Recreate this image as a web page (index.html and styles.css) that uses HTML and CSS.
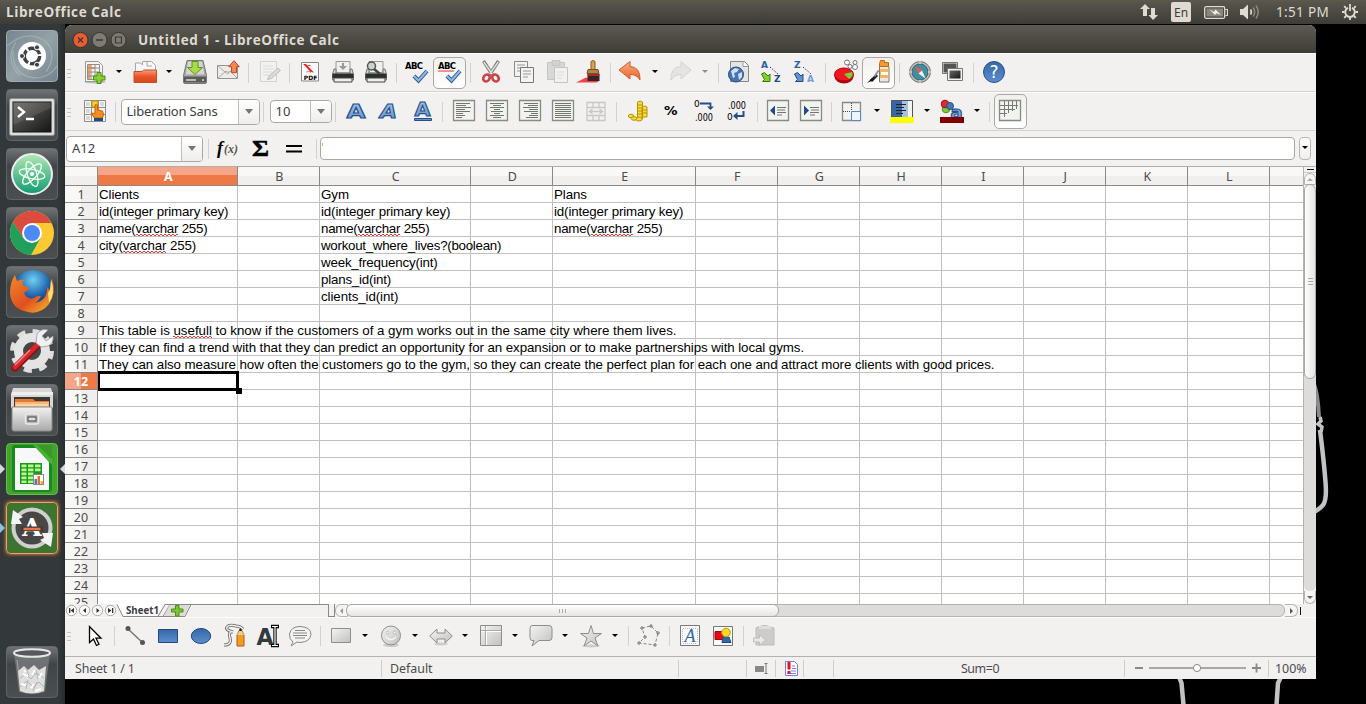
FILE: index.html
```html
<!DOCTYPE html>
<html lang="en">
<head>
<meta charset="utf-8">
<title>Untitled 1 - LibreOffice Calc</title>
<link rel="stylesheet" href="styles.css">
</head>
<body>
<svg class="defs" width="0" height="0" aria-hidden="true">
  <defs>
    <linearGradient id="gOrange" x1="0" y1="0" x2="0" y2="1"><stop offset="0" stop-color="#fbb07c"/><stop offset="1" stop-color="#e9602c"/></linearGradient>
    <linearGradient id="gFolder" x1="0" y1="0" x2="0" y2="1"><stop offset="0" stop-color="#f4a287"/><stop offset=".5" stop-color="#e9562a"/><stop offset="1" stop-color="#d5491c"/></linearGradient>
    <linearGradient id="gGrey" x1="0" y1="0" x2="1" y2="1"><stop offset="0" stop-color="#f4f4f4"/><stop offset="1" stop-color="#c0c0bf"/></linearGradient>
    <linearGradient id="gSteel" x1="0" y1="0" x2="0" y2="1"><stop offset="0" stop-color="#f2f2f2"/><stop offset="1" stop-color="#a9a9a9"/></linearGradient>
    <linearGradient id="gBlue" x1="0" y1="0" x2="0" y2="1"><stop offset="0" stop-color="#3667a6"/><stop offset="1" stop-color="#5c8fce"/></linearGradient>
    <linearGradient id="gPale" x1="0" y1="0" x2="0" y2="1"><stop offset="0" stop-color="#b4cdea"/><stop offset="1" stop-color="#5e8fcb"/></linearGradient>
    <linearGradient id="gTile" x1="0" y1="0" x2="0" y2="1"><stop offset="0" stop-color="#717476"/><stop offset=".35" stop-color="#414547"/><stop offset="1" stop-color="#4b4f51"/></linearGradient>
    <linearGradient id="gDash" x1="0" y1="0" x2="1" y2="1"><stop offset="0" stop-color="#75868e"/><stop offset=".5" stop-color="#95a2a8"/><stop offset="1" stop-color="#74848c"/></linearGradient>
    <linearGradient id="gAtom" x1="0" y1="0" x2="0" y2="1"><stop offset="0" stop-color="#b4e8b4"/><stop offset="1" stop-color="#119b72"/></linearGradient>
    <linearGradient id="gInk" x1="0" y1="0" x2="1" y2="1"><stop offset="0" stop-color="#6a6a68"/><stop offset="1" stop-color="#151515"/></linearGradient>
    <radialGradient id="gFox" cx=".5" cy=".25" r=".7"><stop offset="0" stop-color="#6fd0f4"/><stop offset=".6" stop-color="#1b5ea8"/><stop offset="1" stop-color="#12306d"/></radialGradient>
    <linearGradient id="gFur" x1="0" y1="0" x2="1" y2="1"><stop offset="0" stop-color="#f08a2a"/><stop offset=".55" stop-color="#e0501f"/><stop offset="1" stop-color="#f9c52d"/></linearGradient>
  </defs>
</svg>

<header class="panel">
  <span class="panel-title">LibreOffice Calc</span>
  <div class="indicators">
    <svg width="18" height="16" viewBox="0 0 18 16"><path d="M5 0L10 5H7V12H3V5H0ZM13 16L8.500 11H11V4H15V11H18Z" fill="#dfdbd2"/></svg>
    <span class="lang">En</span>
    <svg class="battery" width="24" height="13" viewBox="0 0 24 13"><rect x=".7" y=".7" width="20" height="11.600" rx="1.500" fill="none" stroke="#dfdbd2" stroke-width="1.300"/><rect x="2.500" y="2.500" width="16.500" height="8" fill="#88867f"/><path d="M21.500 3.500h2v6h-2" fill="none" stroke="#dfdbd2" stroke-width="1.200"/><path d="M5.500 3.500L10 6l1.500-2.500 5.500 5.500-4.500-1.800-1.500 1.800z" fill="#f3efe6"/></svg>
    <svg class="sound" width="20" height="16" viewBox="0 0 20 16"><path d="M0 5h3l5-4.500v15L3 11H0z" fill="#dfdbd2"/><path d="M10.500 5.500q1.700 2.500 0 5" fill="none" stroke="#dfdbd2" stroke-width="1.600"/><path d="M13.200 3.500q3 4.500 0 9M16 1.500q4.500 6.500 0 13" fill="none" stroke="#8d8a82" stroke-width="1.500"/></svg>
    <span class="clock">1:51 PM</span>
    <svg class="gear" width="16" height="16" viewBox="0 0 16 16" fill="none" stroke="#dfdbd2"><path d="M6 3.800A4.800 4.800 0 1 0 10 3.800" stroke-width="2"/><path d="M8 0V7M8 13.500V16M0 8H2.500M13.500 8H16M2.200 2.200L4 4M12 12l1.800 1.800M13.800 2.200L12 4M4 12l-1.800 1.800" stroke-width="1.800"/></svg>
  </div>
</header>

<div class="desktop">
  <nav class="launcher">
    <svg class="tile" viewBox="0 0 52 52"><rect class="tile-dash" x=".5" y=".5" width="51" height="51" rx="4"/><g fill="none" stroke="#b4c0c5" stroke-opacity=".55" stroke-width="1.300"><path d="M1 16Q22 -2 40 12Q52 24 40 42"/><path d="M7 21Q6 45 28 48Q43 48 51 36"/><path d="M10 12Q-2 30 14 46"/></g><circle cx="26" cy="26" r="14" fill="#fff"/><circle cx="26" cy="26" r="7.700" fill="none" stroke="#3b4145" stroke-width="3.400" stroke-dasharray="14 2.130"/><g fill="#3b4145" stroke="#fff"><circle cx="16" cy="26" r="2.500"/><circle cx="31" cy="17.300" r="2.500"/><circle cx="31" cy="34.700" r="2.500"/></g></svg>
    <svg class="tile" viewBox="0 0 52 52"><rect class="tile-bg" x=".5" y=".5" width="51" height="51" rx="4"/><rect x="3.500" y="9.500" width="45" height="37" rx="2" fill="#dcdcdc" stroke="#8d8d8d"/><rect x="7" y="13" width="38" height="30" fill="url(#gInk)" stroke="#111"/><path d="M7 13h38v6L7 36z" fill="#fff" opacity=".1"/><path d="M12 18l6 5-6 5M20 30h8" fill="none" stroke="#fff" stroke-width="2.400"/></svg>
    <svg class="tile" viewBox="0 0 52 52"><rect class="tile-bg" x=".5" y=".5" width="51" height="51" rx="4"/><circle cx="26" cy="26" r="20" fill="url(#gAtom)" stroke="#ededed" stroke-width="2"/><g fill="none" stroke="#f2fff5" stroke-width="1.300"><ellipse cx="26" cy="26" rx="13" ry="4.700" transform="rotate(12 26 26)"/><ellipse cx="26" cy="26" rx="13" ry="4.700" transform="rotate(72 26 26)"/><ellipse cx="26" cy="26" rx="13" ry="4.700" transform="rotate(132 26 26)"/></g><circle cx="26" cy="26" r="2" fill="#fff"/></svg>
    <svg class="tile" viewBox="0 0 52 52"><rect class="tile-bg" x=".5" y=".5" width="51" height="51" rx="4"/><circle cx="26" cy="26" r="22" fill="#fbc934"/><path d="M26 26L26 16H45.600A22 22 0 0 0 7 15L17 31z" fill="#db4c3f"/><path d="M7 15A22 22 0 0 0 25 48L34.500 31L17.300 31z" fill="#21a05c"/><circle cx="26" cy="26" r="10" fill="#fff"/><circle cx="26" cy="26" r="8" fill="#4c8bf5"/></svg>
    <svg class="tile" viewBox="0 0 52 52"><rect class="tile-bg" x=".5" y=".5" width="51" height="51" rx="4"/><circle cx="27" cy="24" r="20" fill="url(#gFox)"/><path d="M46 12Q51 27 43 38Q34 49 22 46Q5 43 4 27Q4 16 9 9L11 15Q15 13 18 14Q15 18 18 20L24 22Q20 25 18 27Q21 34 28 32Q31 29 35 30Q32 36 28 37Q42 35 41 21L44 24Q46 18 46 12Z" fill="url(#gFur)"/><path d="M45 13Q50 26 43 37L42 27L44 24Z" fill="#ffe06a"/></svg>
    <svg class="tile" viewBox="0 0 52 52"><rect class="tile-bg" x=".5" y=".5" width="51" height="51" rx="4"/><circle cx="26" cy="26" r="19.500" fill="none" stroke="#dedede" stroke-width="5" stroke-dasharray="8 7.315"/><circle cx="26" cy="26" r="13.500" fill="none" stroke="#e4e4e4" stroke-width="9"/><path d="M9 43L34 18" stroke="#8c1212" stroke-width="7" stroke-linecap="round"/><path d="M9 42L33 18" stroke="#d7262d" stroke-width="5" stroke-linecap="round"/><path d="M9 40L24 25" stroke="#f28a8d" stroke-width="1.500"/><path d="M30 18L31 9Q35 3 42 5L36 11L40 16L47 11Q48 18 42 21L35 22Z" fill="#f1f1f1" stroke="#999" stroke-width=".8"/></svg>
    <svg class="tile" viewBox="0 0 52 52"><rect class="tile-bg" x=".5" y=".5" width="51" height="51" rx="4"/><path d="M7 4H45L47 11V24H5V11z" fill="#d8d8d7"/><path d="M5 11H47V8H6z" fill="#eee"/><rect x="8" y="13" width="36" height="13" fill="#3b3835"/><path d="M9 15h18l2 2h14v8H9z" fill="#e97832"/><path d="M9 18h34v7H9z" fill="#f6b878"/><path d="M10 21h32" stroke="#fff0d8"/><path d="M6 23H46V45Q46 47 44 47H8Q6 47 6 45z" fill="url(#gSteel)" stroke="#8a8a8a"/><rect x="19.500" y="30" width="13" height="10" rx="2" fill="#b8b8b8" stroke="#e9e9e9" stroke-width="1.500"/><rect x="22" y="33" width="8" height="4" fill="#ddd" stroke="#444"/></svg>
    <div class="running">
      <svg class="tile" viewBox="0 0 52 52"><rect x=".5" y=".5" width="51" height="51" rx="4" fill="#43a42c" stroke="#65bf50"/><rect x="6" y="2" width="40" height="47" rx="3" fill="#168a1c"/><path d="M9 5H31L43 19V47H9z" fill="#f8f8f8"/><path d="M27 2H46V22z" fill="#45b432"/><path d="M31 2H46V16z" fill="#3a9827"/><rect x="14" y="20" width="22" height="21" fill="#18981d"/><g fill="#b8f68f"><path d="M15.500 21.500h5v2.700h-5zM22 21.500h5.500v2.700H22zM29 21.500h5.500v2.700H29zM15.500 25.500h5v2.700h-5zM22 25.500h5.500v2.700H22zM29 25.500h5.500v2.700H29zM15.500 29.500h5v2.700h-5zM22 29.500h5.500v2.700H22zM15.500 33.500h5v2.700h-5zM22 33.500h5.500v2.700H22zM15.500 37.500h5v2.500h-5zM22 37.500h5.500v2.500H22z"/></g><rect x="27.500" y="31.500" width="10" height="10" fill="#fff" stroke="#888"/><path d="M28.500 36h2.500v5h-2.500z" fill="#3c7fc4"/><path d="M31.500 33h2.500v8h-2.500z" fill="#ea6c2a"/><path d="M34.500 38h2.500v3h-2.500z" fill="#e9b52f"/></svg>
    </div>
    <div class="running alert">
      <svg class="tile updater" viewBox="0 0 52 52"><rect x=".5" y=".5" width="51" height="51" rx="4" fill="#3d7431" stroke="#f0a568"/><circle cx="26" cy="26" r="18.500" fill="#484745" stroke="#cfcfcd" stroke-width="4"/><path d="M5 22L7 8L17 15L13 17L16 22z" fill="#f4f4f4"/><path d="M47 31L45 45L34 38L38 36L36 31z" fill="#f4f4f4"/><text x="26" y="34" text-anchor="middle" font-size="25" class="slab white">A</text><path d="M15 26.700h22" stroke="#3c3b39" stroke-width="4.500"/><path d="M17.500 27h17" stroke="#ed7443" stroke-width="2.400"/></svg>
    </div>
    <svg class="tile trash" viewBox="0 0 52 52"><rect class="tile-bg" x=".5" y=".5" width="51" height="51" rx="4"/><path d="M8 7L13 46Q26 50 39 46L44 7z" fill="#7d8082" opacity=".75"/><path d="M12 25L18 20L22 24L28 19L33 24L40 20L38 45Q26 50 14 45z" fill="#dedede"/><path d="M14 32l6-4 5 5 5-6 8 5M14 41l7-6 6 6 6-5 5 5M20 22l3 8M30 24l2 9M22 34l-2 9M31 36l-4 9" stroke="#b4b4b4" fill="none"/><path d="M17 28l5 2M26 29l3-5M25 42l3-4M33 32l3-5M15 38l5 1M29 45l6-2M18 24l2 2" stroke="#fff" stroke-width="2"/><ellipse cx="26" cy="7" rx="18" ry="3.700" fill="#56595a" stroke="#e7e7e7" stroke-width="2"/><path d="M11 14l4 29" stroke="#d6d6d6" opacity=".5"/></svg>
  </nav>

  <main class="window">
    <div class="titlebar">
      <svg width="58" height="18" viewBox="0 0 58 18"><g stroke="#36352f"><circle cx="8.500" cy="9" r="7.500" fill="#e95d33"/><circle cx="27.500" cy="9" r="7.500" fill="#7d7b72"/><circle cx="46.500" cy="9" r="7.500" fill="#7d7b72"/></g><path d="M6 6.500l5 5M11 6.500l-5 5M24 9h7" stroke="#3b3934" stroke-width="1.300"/><path d="M43.500 6h6v6h-6z" fill="none" stroke="#3b3934" stroke-width="1.200"/></svg>
      <span class="window-title">Untitled 1 - LibreOffice Calc</span>
    </div>

    <div class="toolbar">
      <i class="grip"></i>
      <span class="btn"><svg viewBox="0 0 24 24"><ellipse cx="12" cy="22" rx="11" ry="1.500" fill="#bbb"/><path d="M2.500 1.500h13l4 4v16h-17z" fill="#f5f5f4" stroke="#9a9a98"/><path d="M4.500 4.500h12v15h-12zM8 4v16M12 4v16M4 8h13M4 12h13M4 16h13" fill="none" stroke="#8e8e8c"/><path d="M5 4h2.500v3H12v2H7v10H5z" fill="#d9803b" opacity=".7"/><path d="M14 12.500h4v3.500h4v4h-4v3.500h-4V20h-3.500v-4H14z" fill="#87cf35" stroke="#4e8b12"/></svg></span><i class="drop"></i>
      <span class="btn"><svg viewBox="0 0 24 24"><path d="M2.500 20V3h5l2 2v-3.500h9l4 4V13" fill="#f8f8f8" stroke="#a7a7a5"/><path d="M14 2v4h5" fill="none" stroke="#aaa"/><path d="M1 11.500h8l1.500-1.500H23.500V22.500H1z" fill="url(#gFolder)" stroke="#cb4d20"/></svg></span><i class="drop"></i>
      <span class="btn"><svg viewBox="0 0 24 24"><path d="M4 .5h16l3.500 15V22q0 1.500-1.500 1.500H2Q.5 23.500.5 22v-6.500z" fill="#a5a5a3" stroke="#777"/><path d="M5 1.500h14l2.500 13h-19z" fill="#d5d5d3"/><path d="M1 16.500h22V22.500H1z" fill="#5b5b59"/><path d="M3 20h10M19 20h2" stroke="#bbb" stroke-width="2"/><path d="M9 1.500h6v6h4.500L12 14.500 4.500 7.500H9z" fill="#a6db4b" stroke="#5d9619"/></svg></span>
      <span class="btn"><svg viewBox="0 0 24 24"><path d="M1.500 5.500h20v13h-20z" fill="#ececea" stroke="#939391"/><path d="M2 18l8-7 2 1.500 2-1.500 7 7M2 6l9.500 8L18 8" fill="none" stroke="#aaa"/><path d="M18 .7l5.300 6H20.500v6h-5v-6h-2.800z" fill="#f18855" stroke="#c64819"/></svg></span><i class="sep"></i>
      <span class="btn dim"><svg viewBox="0 0 24 24"><path d="M3.500 1.500h16v20h-16z" fill="#f4f4f4" stroke="#aaa"/><path d="M6 6h10M6 9h11M6 12h9M6 15h6" stroke="#bbb"/><path d="M21 8l2.500 2.500-9 8-4 1 1.500-3.500z" fill="#bbb" stroke="#777"/></svg></span><i class="sep"></i>
      <span class="btn"><svg viewBox="0 0 24 24"><path d="M3.500 2.500h17v18.500h-17z" fill="#fbfbfb" stroke="#888"/><path d="M5 4h3l8 8.500-3-.5zM9 5l5 0-3 1z" fill="#e8242b"/><path d="M10 7l2.500 6M8 12l6-1" stroke="#e8242b" opacity=".6"/><text x="12.500" y="20" text-anchor="middle" font-size="6" class="bold">PDF</text></svg></span>
      <span class="btn"><svg viewBox="0 0 24 24"><path d="M5 1.500h14v11H5z" fill="#efefed" stroke="#999"/><path d="M11 3h2v3h3l-4 4-4-4h3z" fill="#999"/><path d="M3 9L1.500 14.500V20h21v-5.500L21 9h-2v5H5V9z" fill="#d1d1cf" stroke="#777"/><path d="M1.500 13.500h21V18h-21z" fill="#2d2d2b"/><path d="M3 18h18v4H3z" fill="#eee" stroke="#444"/></svg></span>
      <span class="btn"><svg viewBox="0 0 24 24"><path d="M5 1.500h14v11H5z" fill="#efefed" stroke="#999"/><path d="M3 9L1.500 14.500V20h21v-5.500L21 9h-2v5H5V9z" fill="#d1d1cf" stroke="#777"/><path d="M1.500 13.500h21V18h-21z" fill="#2d2d2b"/><path d="M3 18h18v4H3z" fill="#eee" stroke="#444"/><circle cx="7.500" cy="6" r="4" fill="#cbd1d3" stroke="#555" stroke-width="1.500"/><path d="M10 9l6 5" stroke="#444" stroke-width="2.500"/></svg></span><i class="sep"></i>
      <span class="btn"><svg viewBox="0 0 24 24"><text x="0" y="9" font-size="8.500" textLength="18" class="bold">ABC</text><path d="M9 16l4.500 4.500L22 11" fill="none" stroke="#2c598f" stroke-width="4"/><path d="M9 16l4.500 4.500L22 11" fill="none" stroke="#8db7e5" stroke-width="2.200"/></svg></span>
      <span class="btn pressed"><svg viewBox="0 0 24 24"><text x="0" y="9" font-size="8.500" textLength="18" class="bold">ABC</text><path d="M0 10.500l1 1 1-1 1 1 1-1 1 1 1-1 1 1 1-1 1 1 1-1 1 1 1-1 1 1 1-1 1 1 1-1" fill="none" stroke="#e11"/><path d="M9 16l4.500 4.500L22 11" fill="none" stroke="#2c598f" stroke-width="4"/><path d="M9 16l4.500 4.500L22 11" fill="none" stroke="#8db7e5" stroke-width="2.200"/></svg></span><i class="sep"></i>
      <span class="btn"><svg viewBox="0 0 24 24"><path d="M4.500 1l9 14M19.500 1l-9 14" stroke="#7a7a78" stroke-width="3.300"/><path d="M4.800 2l8.500 12M19.200 2l-8.500 12" stroke="#dedede" stroke-width="1.500"/><ellipse cx="7.500" cy="18" rx="3" ry="3.700" transform="rotate(35 7.500 18)" fill="none" stroke="#cb4242" stroke-width="2.600"/><ellipse cx="16.500" cy="18" rx="3" ry="3.700" transform="rotate(-35 16.500 18)" fill="none" stroke="#cb4242" stroke-width="2.600"/></svg></span>
      <span class="btn"><svg viewBox="0 0 24 24"><path d="M2.500 1.500h13v15h-13z" fill="#f3f3f1" stroke="#888a85"/><path d="M5 5h8M5 8h8M5 11h4" stroke="#999"/><path d="M8.500 7.500h13v15h-13z" fill="#f3f3f1" stroke="#777"/><path d="M11 11h8M11 14h8M11 17h5" stroke="#999"/></svg></span>
      <span class="btn dim"><svg viewBox="0 0 24 24"><path d="M2.500 2.500h17v17h-17z" fill="#b6b6b4" stroke="#888"/><path d="M7 .5h8v5H7z" fill="#aaa" stroke="#888"/><path d="M9.500 7.500h13v15h-13z" fill="#f3f3f1" stroke="#888"/><path d="M12 12h7M12 15h7M12 18h5" stroke="#bbb"/></svg></span>
      <span class="btn"><svg viewBox="0 0 24 24"><path d="M-2 22.500l10-5 13 4-3 1z" fill="#ef424b"/><path d="M13 1.500q2-2 4 0v9h-4z" fill="#d8a256" stroke="#8d5b1f"/><path d="M10 9.500h10l1 4H9z" fill="#b28549" stroke="#725323"/><path d="M9.500 14h12l0 7-12 0z" fill="#382326"/><path d="M9.500 15h12" stroke="#c72c30" stroke-width="1.500"/></svg></span><i class="sep"></i>
      <span class="btn"><svg viewBox="0 0 24 24"><path d="M0 10L11 1.500V6.500Q21.500 7 21 20Q18 14.500 11 14.500V19z" fill="url(#gOrange)" stroke="#ca622e"/></svg></span><i class="drop"></i>
      <span class="btn dim"><svg viewBox="0 0 24 24"><path d="M22 10L12 1.500V6.500Q1.500 7 2 20Q5 14.500 12 14.500V19z" fill="#d4d4d2" stroke="#aaa"/></svg></span><i class="drop dim"></i><i class="sep"></i>
      <span class="btn"><svg viewBox="0 0 24 24"><path d="M3.500 1.500h14l4 4v16h-18z" fill="#e5e5e3" stroke="#888"/><path d="M16 1.500v5h5" fill="#fff" stroke="#999"/><circle cx="9" cy="14.500" r="7.500" fill="#4774b1" stroke="#244f86"/><path d="M4 11l4-3 4 1-2 3-3 1 1 4-2 1zM11 14l4-2v5l-3 3z" fill="#cfe0f2"/></svg></span>
      <span class="btn"><svg viewBox="0 0 24 24"><text x="1" y="8" font-size="9" class="bold blue">A</text><text x="14" y="22" font-size="9" class="bold navy">Z</text><path d="M10 7l8 7" stroke="#335" stroke-dasharray="1.500 1.500"/><path d="M1.500 14l3-1.500 3.500 3.500 2-2v7.500H2.500l2-2z" fill="#7dd32c" stroke="#3f7a0c"/></svg></span>
      <span class="btn"><svg viewBox="0 0 24 24"><text x="1" y="8" font-size="9" class="bold blue">Z</text><text x="14" y="22" font-size="9" class="bold sky">A</text><path d="M10 7l8 7" stroke="#335" stroke-dasharray="1.500 1.500"/><path d="M1.500 14l3-1.500 3.500 3.500 2-2v7.500H2.500l2-2z" fill="#5f93d2" stroke="#204a87"/></svg></span><i class="sep"></i>
      <span class="btn"><svg viewBox="0 0 24 24"><ellipse cx="10" cy="16.500" rx="9.500" ry="7" fill="#a50d12"/><ellipse cx="10" cy="14.500" rx="9.500" ry="6.500" fill="#f01720" stroke="#b00"/><path d="M10 14l8-2q2 4-3 7z" fill="#76ce38"/><g fill="#fff" stroke="#777"><circle cx="13" cy="2.500" r="2.500"/><circle cx="21" cy="2.500" r="2"/><circle cx="16" cy="6.500" r="2"/><circle cx="21" cy="7" r="2.500"/></g></svg></span>
      <span class="btn pressed"><svg viewBox="0 0 24 24"><path d="M12.500 6q0-3 4.500-3t4.500 3l.5 2v14h-9.500z" fill="#e9e9e7" stroke="#777"/><path d="M13.500 .5h4v2l4 0v4h-9v-3z" fill="#f29a33" stroke="#c46b10"/><path d="M13 9h8.500v9H13z" fill="#f7b45c"/><path d="M14 12h7v3h-7z" fill="#fff"/><path d="M10 15L4 21" stroke="#222" stroke-width="3"/><path d="M11.500 10.500l-4 6" stroke="#8e8e8c" stroke-width="1.800"/><path d="M0 23l5-5 2 2z" fill="#111"/></svg></span><i class="sep"></i>
      <span class="btn"><svg viewBox="0 0 24 24"><circle cx="12" cy="12" r="10.500" fill="#b7b9b7" stroke="#777"/><circle cx="12" cy="12" r="8" fill="#438d9e" stroke="#376876"/><path d="M6.500 5.500l7.500 5-3.500 3z" fill="#e85a50"/><path d="M17.500 18.500l-7-5 3.500-3z" fill="#e3f5f8"/><path d="M12 1v3M12 20v3M1 12h3M20 12h3" stroke="#eee"/></svg></span>
      <span class="btn"><svg viewBox="0 0 24 24"><path d="M2 3h14v10H2z" fill="#555" stroke="#eee"/><path d="M1.500 2.500h15v11h-15z" fill="none" stroke="#777"/><path d="M6.500 8.500h15v12h-15z" fill="#f1f1f1" stroke="#777"/><path d="M8.500 10.500h11v8h-11z" fill="url(#gInk)"/></svg></span><i class="sep"></i>
      <span class="btn"><svg viewBox="0 0 24 24"><circle cx="12" cy="12" r="10.500" fill="url(#gBlue)" stroke="#24538b"/><text x="12" y="18" text-anchor="middle" font-size="17" class="white">?</text></svg></span>
    </div>

    <div class="toolbar">
      <i class="grip"></i>
      <span class="btn"><svg viewBox="0 0 24 24"><path d="M1.500 1.500h21v21h-21zM8.500 1v22M15.500 1v22M1 8.500h22M1 15.500h22" fill="#f6f6f4" stroke="#8d8d8b"/><path d="M3 3h4v4H3zM3 10h4v4H3zM3 17h4v4H3zM17 3h4v4h-4z" fill="#d9d9d7"/><path d="M9 2h6v6H9z" fill="#f7d433" stroke="#bb9510"/><path d="M12 6q1.500-1.500 2.500 0v5l5 1q2 3 0 7h-8l-3.500-5 4 .5z" fill="#f78f1e" stroke="#cf5f05"/><path d="M11 19h9v3h-9z" fill="#214a85"/></svg></span><i class="sep"></i>
      <div class="combo font-combo"><span>Liberation Sans</span><i></i></div><i class="sep"></i>
      <div class="combo size-combo"><span>10</span><i></i></div><i class="sep"></i>
      <span class="btn"><svg viewBox="0 0 24 24"><text x="2.500" y="18.500" font-size="20" textLength="19" lengthAdjust="spacingAndGlyphs" class="bold letter">A</text></svg></span>
      <span class="btn"><svg viewBox="0 0 24 24"><text x="3" y="18.500" font-size="20" textLength="17" lengthAdjust="spacingAndGlyphs" class="bold letter slant">A</text></svg></span>
      <span class="btn"><svg viewBox="0 0 24 24"><text x="4.500" y="16.500" font-size="20" textLength="16" lengthAdjust="spacingAndGlyphs" class="bold letter">A</text><path d="M4.500 19.500h17v2h-17z" fill="#5e8fcb" stroke="#244f88"/></svg></span><i class="sep"></i>
      <span class="btn nudge"><svg viewBox="0 0 24 24"><path class="sheet" d="M1.500 1.500h21v20h-21z"/><path class="lines" d="M4 4.500h14M4 6.500h10M4 8.500h15M4 10.500h9M4 12.500h14M4 14.500h7M4 16.500h9M4 18.500h6"/></svg></span>
      <span class="btn"><svg viewBox="0 0 24 24"><path class="sheet" d="M1.500 1.500h21v20h-21z"/><path class="lines" d="M5 4.500h14M8 6.500h8M5 8.500h14M9 10.500h6M6 12.500h12M9 14.500h6M5 16.500h14M8 18.500h8"/></svg></span>
      <span class="btn"><svg viewBox="0 0 24 24"><path class="sheet" d="M1.500 1.500h21v20h-21z"/><path class="lines" d="M6 4.500h14M10 6.500h10M5 8.500h15M11 10.500h9M6 12.500h14M13 14.500h7M11 16.500h9M8 18.500h12"/></svg></span>
      <span class="btn"><svg viewBox="0 0 24 24"><path class="sheet" d="M1.500 1.500h21v20h-21z"/><path class="lines" d="M4 4.500h16M4 6.500h16M4 8.500h16M4 10.500h16M4 12.500h16M4 14.500h16M4 16.500h16M4 18.500h16"/></svg></span>
      <span class="btn dim"><svg viewBox="0 0 24 24"><path d="M3 3.500h18v18H3zM3 8.500h18M3 16.500h18M9 3.500v5M15 3.500v5M9 16.500v5M15 16.500v5M6 12.500h12M8.500 10l-3 2.500 3 2.500M15.500 10l3 2.500-3 2.500" fill="none" stroke="#8d8f91" stroke-width="1.300"/></svg></span><i class="sep"></i>
      <span class="btn nudge"><svg viewBox="0 0 24 24"><g fill="#f7dc3c" stroke="#b79404"><path d="M11.500 3q3-2 5 0v17h-5zM16 8q3-2 5 0v10h-5z"/><ellipse cx="13" cy="20" rx="3.200" ry="2"/><ellipse cx="5" cy="17" rx="2.700" ry="1.800"/><ellipse cx="8" cy="19.500" rx="2.700" ry="1.800"/></g><path d="M12 6h4M12 9h4M12 12h4M12 15h4M17 11h4M17 14h4" stroke="#b79404"/></svg></span>
      <span class="btn"><svg viewBox="0 0 24 24"><text x="5" y="16" font-size="12" textLength="13.500" lengthAdjust="spacingAndGlyphs" class="bold">%</text></svg></span>
      <span class="btn"><svg viewBox="0 0 24 24"><text x="2" y="8" font-size="9">0</text><text x="3" y="21.500" font-size="10" textLength="18" lengthAdjust="spacingAndGlyphs">.000</text><path d="M8 4.500h10.500v5" fill="none" stroke="#244f88" stroke-width="1.800"/><path d="M15 7.500h7L18.500 11z" fill="#244f88"/></svg></span>
      <span class="btn"><svg viewBox="0 0 24 24"><text x="3" y="9.500" font-size="10" textLength="18" lengthAdjust="spacingAndGlyphs">.000</text><text x="2" y="21" font-size="9">0</text><path d="M18.500 12v5h-7" fill="none" stroke="#244f88" stroke-width="2"/><path d="M12.500 13v8L8 17z" fill="#244f88"/></svg></span><i class="sep"></i>
      <span class="btn"><svg viewBox="0 0 24 24"><path class="sheet" d="M1.500 1.500h21v20h-21z"/><path d="M9 6.500v10L4 11.500z" fill="#204a87"/><path class="lines" d="M11 8.500h9M11 11h8M11 13.500h9M11 16h5"/></svg></span>
      <span class="btn"><svg viewBox="0 0 24 24"><path class="sheet" d="M1.500 1.500h21v20h-21z"/><path d="M5 6.500v10l5-5z" fill="#204a87"/><path class="lines" d="M11 8.500h9M12 11h8M11 13.500h9M11 16h5"/></svg></span><i class="sep"></i>
      <span class="btn"><svg viewBox="0 0 24 24"><path class="sheet" d="M2.500 3.500h18v18h-18z"/><path d="M11.500 4v8M3 12.500h8" stroke="#444" stroke-dasharray="1 1"/><path d="M11.500 12.500h9v9h-9z" fill="#eef4fb" stroke="#5b86bd"/></svg></span><i class="drop"></i>
      <span class="btn"><svg viewBox="0 0 24 24"><path d="M1.500 1.500h21v17h-21z" fill="#f4f4f4" stroke="#555"/><path d="M2 2h10v16H2z" fill="#3766a7"/><path d="M12 2h6v16h-6z" fill="#a9c0de"/><path class="ink" d="M6 5.500h10M6 8.500h8M6 11.500h10M6 14.500h7"/><path d="M0 18h24v6H0z" fill="#ff0"/></svg></span><i class="drop"></i>
      <span class="btn"><svg viewBox="0 0 24 24"><circle cx="6" cy="10" r="3.800" fill="#77cd34" stroke="#4c8c15"/><circle cx="5" cy="5" r="3.800" fill="#e8272e" stroke="#a11016"/><circle cx="10" cy="7" r="3.500" fill="#4577b8" stroke="#244f88"/><text x="10.500" y="19.500" font-size="18" class="bold letter">a</text><path d="M0 18h24v6H0z" fill="#800000"/></svg></span><i class="drop"></i><i class="sep"></i>
      <span class="btn pressed wide"><svg viewBox="0 0 24 24"><path class="sheet" d="M1.500 1.500h21v20h-21z"/><path d="M2 6.500h18M2 10.500h15M2 14.500h7M6.500 2v16M10.500 2v12M14.500 2v10M18.500 2v8" stroke="#777975"/></svg></span>
    </div>

    <div class="formula-bar">
      <div class="combo name-box"><span>A12</span><i></i></div><i class="sep"></i>
      <svg class="fx" width="96" height="26" viewBox="0 0 96 26"><text x="4" y="17.500" font-size="18" class="serif">f</text><text x="11" y="17" font-size="12.500" textLength="14" lengthAdjust="spacingAndGlyphs" class="serif soft">(x)</text><text x="39" y="20" font-size="23" textLength="17" lengthAdjust="spacingAndGlyphs" class="sigma">Σ</text><path d="M73 10h16M73 15.500h16" stroke="#000" stroke-width="2"/></svg>
      <i class="sep"></i>
      <div class="formula-input"></div>
      <div class="expand"><i class="drop"></i></div>
    </div>

    <div class="sheet-area">
      <div class="grid" id="grid"></div>
      <div class="vscroll">
        <i class="split"></i>
        <i class="cap up"></i>
        <i class="thumb"></i>
        <i class="trough"></i>
        <i class="cap down"></i>
      </div>
    </div>

    <div class="tab-row">
      <svg class="tabs" width="263" height="14" viewBox="0 0 263 14"><rect width="263" height="14" fill="#f2f1f0"/><g fill="#fafafa" stroke="#aaa"><circle cx="6.500" cy="6.500" r="5.200"/><circle cx="19.500" cy="6.500" r="5.200"/><circle cx="32.500" cy="6.500" r="5.200"/><circle cx="45.500" cy="6.500" r="5.200"/></g><g fill="#333" stroke="none"><path d="M4 4h1.300v5H4zM9 4v5L5.500 6.500zM21 4v5L18 6.500zM31.500 4v5l3-2.500zM43 4v5l3.500-2.500zM47 4h1.300v5H47z"/></g><path d="M52 0h47l-7 12.500H59z" fill="#fff"/><path d="M52 .5l6 12h40l7-12h-5l-7 12M105 .5h21l-6 12H98" fill="none" stroke="#8b8985"/><path d="M104.500 1H125l-5.500 11H99z" fill="#dedcda"/><path d="M110.500 1.500h3.500v3.500h4v3h-4v4h-3.500V8h-4V5h4z" fill="#79c833" stroke="#4c8f14"/><path d="M126 .5h137" stroke="#8b8985"/><text x="61" y="9.800" font-size="11" textLength="33" lengthAdjust="spacingAndGlyphs" class="bold dark">Sheet1</text></svg>
      <i class="hsplit"></i>
      <i class="hcap left"></i>
      <i class="hthumb"></i>
      <i class="htrough"></i>
      <i class="hcap right"></i>
      <i class="hend"></i>
    </div>

    <div class="toolbar drawing">
      <i class="grip"></i>
      <span class="btn"><svg viewBox="0 0 24 24"><path d="M7.500 2.500v16l4-3.500 3 6.500 2.500-1.200-3-6.100h5z" fill="#fff" stroke="#000" stroke-width="1.300"/></svg></span><i class="sep"></i>
      <span class="btn"><svg viewBox="0 0 24 24"><path d="M5 5l15 14" stroke="#777" stroke-width="1.500"/><circle cx="5" cy="4.500" r="2.500" fill="#555"/><circle cx="19.500" cy="18.500" r="2.500" fill="#555"/></svg></span>
      <span class="btn"><svg viewBox="0 0 24 24"><path d="M2.500 5.500h19v13h-19z" fill="url(#gBlue)" stroke="#204a87"/></svg></span>
      <span class="btn"><svg viewBox="0 0 24 24"><ellipse cx="12" cy="12" rx="9.700" ry="7.500" fill="url(#gBlue)" stroke="#204a87"/></svg></span>
      <span class="btn"><svg viewBox="0 0 24 24"><path d="M2 21q8 0 6-7t3-6q-8-2-6-5t9-1q4 0 7 3" fill="none" stroke="#666" stroke-width="3"/><path d="M2 21q8 0 6-7t3-6q-8-2-6-5t9-1q4 0 7 3" fill="none" stroke="#eee" stroke-width="1.400"/><path d="M15 11l3.500-7 3.500 7v11h-7z" fill="#f39b22" stroke="#a36314"/><path d="M15 11l3.500-6 3.500 6z" fill="#e6cf9f"/><path d="M17 7l1.500-3L20 7z" fill="#222"/></svg></span>
      <span class="btn"><svg viewBox="0 0 24 24"><text x="1.500" y="21" font-size="23.500" textLength="17" lengthAdjust="spacingAndGlyphs" class="bold slate">A</text><path d="M16 2.500h8M16 21.500h8M20 3v18" stroke="#000" stroke-width="3.300"/><path d="M17 2.500h6M17 21.500h6M20 3v18" stroke="#fff" stroke-width="1.200"/></svg></span>
      <span class="btn"><svg viewBox="0 0 24 24"><path d="M5 18Q1 15 1.500 10Q3 2.500 12 2.500Q23 3 23 10.500Q22 18 12 18.500L9 18L3 22z" fill="#f3f3f1" stroke="#888a85"/><path d="M7 6.500h10M5 9h14M5 11.500h14M7 14h10" stroke="#888"/></svg></span><i class="sep"></i>
      <span class="btn"><svg viewBox="0 0 24 24"><path class="shape" d="M2.500 4.500h19v14h-19z"/></svg></span><i class="drop"></i>
      <span class="btn"><svg viewBox="0 0 24 24"><ellipse cx="12" cy="21" rx="8" ry="2" fill="#ccc"/><circle class="shape" cx="12" cy="11.500" r="9.500"/><circle cx="8.500" cy="8.500" r="1.300" fill="#fff" stroke="#bbb"/><circle cx="15.500" cy="8.500" r="1.300" fill="#fff" stroke="#bbb"/><path d="M7 13q5 5 10 0" fill="none" stroke="#f4f4f4" stroke-width="1.500"/></svg></span><i class="drop"></i>
      <span class="btn"><svg viewBox="0 0 24 24"><ellipse cx="12" cy="20" rx="7" ry="1.500" fill="#ccc"/><path class="shape" d="M.7 12L8 5v4h8V5l7.300 7-7.300 7v-4H8v4z"/></svg></span><i class="drop"></i>
      <span class="btn"><svg viewBox="0 0 24 24"><path class="shape" d="M1.500 1.500h21v20h-21z"/><path d="M2 7.500h20M7.500 2v19" stroke="#fff"/><path d="M2 6.500h20M6.500 2v19" stroke="#aaa"/></svg></span><i class="drop"></i>
      <span class="btn"><svg viewBox="0 0 24 24"><path class="shape" d="M3 1.500h17q3 0 3 3v9q0 3-3 3H10l-7 5.500 2-5.500H3q-2 0-2-3v-9q0-3 2-3z"/></svg></span><i class="drop"></i>
      <span class="btn"><svg viewBox="0 0 24 24"><ellipse cx="12" cy="22" rx="9" ry="1.500" fill="#ccc"/><path class="shape" d="M12 1.500l2.500 8h8l-6.500 4.500 3 8-7-5-7 5 3-8L1.500 9.500h8z"/></svg></span><i class="drop"></i><i class="sep"></i>
      <span class="btn"><svg viewBox="0 0 24 24"><path d="M5 4L14 2l7 7-3 12-16-2 6-6z" fill="none" stroke="#888" stroke-dasharray="3 2"/><g fill="#eee" stroke="#777"><path d="M4 3h2v2H4zM13 1h2v2h-2zM20 8h2v2h-2zM17 20h2v2h-2zM1 18h2v2H1zM7 12h2v2H7z"/></g></svg></span><i class="sep"></i>
      <span class="btn"><svg viewBox="0 0 24 24"><path d="M2.500 1.500h19v20h-19z" fill="#fafafa" stroke="#777"/><path d="M5 4.500h14M5 19.500h14M4.500 5v14M19.500 5v14" stroke="#bbb" stroke-dasharray="1 1"/><text x="12" y="18" text-anchor="middle" font-size="18" class="serif-blue">A</text></svg></span>
      <span class="btn"><svg viewBox="0 0 24 24"><path d="M2.500 2.500h19v19h-19z" fill="#fafafa" stroke="#777"/><path d="M4 7.500h8v8H4z" fill="#e20b16" stroke="#a00"/><path d="M12 13h6l2 5.500h-9z" fill="#3566a7" stroke="#204a87"/><circle cx="15" cy="8.500" r="4.300" fill="#f7d728" stroke="#bc9906"/></svg></span><i class="sep"></i>
      <span class="btn dim"><svg viewBox="0 0 24 24"><path d="M6 3q8-3 12 0l4 1v17H4V4z" fill="#9a9a98" stroke="#777"/><path d="M7 2h12v3H7z" fill="#c5c5c3"/><path d="M1.500 14h6v-3.500l6 5.500-6 5.500V18h-6z" fill="#dcdcda" stroke="#777"/></svg></span>
    </div>

    <footer class="status">
      <span class="cell c-sheet">Sheet 1 / 1</span>
      <span class="cell c-style">Default</span>
      <span class="cell c-blank"></span>
      <span class="cell c-mode"><svg width="13" height="11" viewBox="0 0 13 11"><path d="M0 3h9v6H0z" fill="#888"/><path d="M9.500.5h3M9.500 10.500h3M11 .5v10" stroke="#777"/></svg></span>
      <span class="cell c-mod"><svg width="15" height="15" viewBox="0 0 15 15"><path d="M1.500 .5h9l3 3v11h-12z" fill="#fff" stroke="#7b7be0"/><path d="M8 5h3M8 7.500h4M7 10h5M3 12.500h9" stroke="#7b7be0"/><path d="M3.500 1h3v7.500h-3zM3.500 10h3v2.500h-3z" fill="#e8111a"/></svg></span>
      <span class="cell c-sign"></span>
      <span class="cell c-sum">Sum=0</span>
      <span class="cell c-zoom"><svg width="127" height="12" viewBox="0 0 127 12"><path d="M0 6h8M117 6h9M121.500 1.500v9" stroke="#888" stroke-width="1.800"/><path d="M14 6h97" stroke="#aaa8a5" stroke-width="1.800"/><circle cx="62" cy="6" r="3.600" fill="#fff" stroke="#888"/></svg></span>
      <span class="cell c-pct">100%</span>
    </footer>
  </main>

  <svg class="wallpaper" width="1366" height="680" viewBox="0 24 1366 680" fill="none" stroke="#c2c3c4"><path d="M1314 384Q1318 395 1319 417" stroke="#8a8b8c" stroke-width="4"/><path d="M1320 417l1 4-3 3 4 3-1 5" stroke-width="3.500"/><path d="M1320 430Q1324 462 1325.500 482Q1327 500 1323 505Q1321 508 1314 512" stroke-width="4.500"/><path d="M1179 677l2.500 6 2 22M1281 677l-3 6-1.500 22" stroke-width="4.500"/></svg>
</div>
<script src="sheet.js"></script>
</body>
</html>
```

FILE: styles.css
```css
* { box-sizing: border-box; }
body {
  margin: 0;
  width: 1366px;
  height: 704px;
  overflow: hidden;
  background: #000;
  color: #4c4c4c;
  font: 13px "Noto Sans", "Open Sans", sans-serif;
}
.defs { position: absolute; }
svg { display: block; flex: none; }
i { font-style: normal; flex: none; }

/* top panel */
.panel {
  height: 24px;
  display: flex;
  align-items: center;
  justify-content: space-between;
  padding: 0 8px 0 6px;
  background: linear-gradient(#5c594e, #56534b 15%, #3d3c37);
  color: #dfdbd2;
}
.panel-title { font: 700 13.5px "Open Sans", sans-serif; letter-spacing: .6px; }
.indicators { display: flex; align-items: center; }
.lang {
  width: 20px;
  height: 20px;
  margin-left: 13px;
  border-radius: 2px;
  background: #dfdbd2;
  color: #3c3b37;
  font-size: 12px;
  line-height: 21px;
  text-align: center;
}
.battery { margin-left: 13px; }
.sound { margin-left: 12px; }
.clock { margin-left: 16px; width: 53px; white-space: nowrap; font-size: 13.5px; letter-spacing: .35px; }
.gear { margin-left: 13px; }

/* desktop */
.desktop { display: flex; height: 680px; position: relative; }
.launcher {
  width: 65px;
  flex: none;
  display: flex;
  flex-direction: column;
  gap: 7px;
  padding: 6px 7px 6px 6px;
  background: linear-gradient(90deg, #33393b 90%, #272c2e);
}
.tile { width: 52px; height: 52px; }
.tile-bg { fill: url(#gTile); stroke: #75797b; stroke-opacity: .6; }
.tile-dash { fill: url(#gDash); stroke: #9eabb1; }
.trash { margin-top: auto; }
.running { position: relative; height: 52px; }
.running::before, .running::after {
  content: "";
  position: absolute;
  top: 21px;
  border: 5px solid transparent;
}
.running::before { left: -6px; border-left-color: #d8d8d8; border-right: 0; }
.running::after { right: -7px; border-right-color: #d8d8d8; border-left: 0; }
.alert::before { border-left-color: #7fc6ea; }
.alert::after { display: none; }
.updater { border-radius: 4px; box-shadow: 0 0 3px 1px #c26f38; }
.wallpaper { position: absolute; left: 0; top: 0; z-index: 0; }

/* window */
.window {
  position: relative;
  z-index: 1;
  width: 1251px;
  height: 654px;
  margin-top: 1px;
  display: flex;
  flex-direction: column;
  background: #f2f1f0;
  border-radius: 7px 7px 0 0;
  overflow: hidden;
}
.titlebar {
  height: 28px;
  flex: none;
  display: flex;
  align-items: center;
  gap: 8px;
  padding: 1px 0 0 7px;
  background: linear-gradient(#5d5a52, #3d3c37);
  color: #dfdbd2;
}
.window-title { font: 700 13.5px "Open Sans", sans-serif; letter-spacing: .6px; }

/* toolbars */
.toolbar {
  height: 39px;
  flex: none;
  display: flex;
  align-items: center;
  border-top: 1px solid #fcfcfb;
  border-bottom: 1px solid #d5d3d0;
}
.grip {
  width: 4px;
  height: 10px;
  margin: 2px 7px 0 2px;
  background: repeating-linear-gradient(#c5c3c0 0 1px, transparent 1px 4px);
}
.btn {
  width: 33px;
  height: 32px;
  flex: none;
  display: grid;
  place-items: center;
  border: 1px solid transparent;
}
.btn svg { width: 24px; height: 24px; margin-top: -1px; overflow: visible; font-family: "DejaVu Sans", sans-serif; }
.btn.pressed {
  border-color: #aaa8a4;
  border-radius: 5px;
  background: linear-gradient(#f1f0ef, #fff);
}
.btn.wide { height: 35px; }
.nudge { margin-left: 1px; }
.dim { opacity: .42; }
.drop { width: 17px; display: grid; place-items: center; }
.drop::before {
  content: "";
  border: 3px solid transparent;
  border-top-color: #000;
  border-bottom: 0;
  margin: -2px 1px 0 0;
}
.sep { width: 8px; height: 20px; background: linear-gradient(#d3d1ce, #d3d1ce) 50% 0 / 1px 100% no-repeat; }
.bold { font-family: "DejaVu Sans", sans-serif; font-weight: 700; }
.letter { fill: url(#gPale); stroke: #244f88; stroke-width: 1.1; }
.slant { font-style: oblique; }
.slate { fill: #333a3e; }
.slab { font-family: "DejaVu Serif", serif; font-weight: 700; }
.sigma { font-family: "Liberation Serif", serif; font-weight: 700; fill: #000; stroke: #000; stroke-width: .5; }
.blue { fill: #2a5fa5; }
.navy { fill: #204a87; }
.sky { fill: #729fcf; }
.white { fill: #fff; }
.dark { fill: #3c3c3c; font-family: "Open Sans", sans-serif; }
.serif { font-family: "Liberation Serif", serif; font-style: italic; font-weight: 700; }
.soft { fill: #55534b; }
.serif-blue { font-family: "Liberation Serif", serif; font-style: italic; fill: #3569a8; }
.sheet { fill: #f1f3ef; stroke: #888a85; stroke-width: 1.3; }
.lines { stroke: #73756f; }
.ink { stroke: #222; }
.shape { fill: url(#gGrey); stroke: #8d8f8b; }

.combo {
  display: flex;
  height: 26px;
  flex: none;
  border: 1px solid #aaa8a3;
  border-radius: 4px;
  background: #fff;
  line-height: 23px;
}
.combo span { flex: 1; padding-left: 5px; white-space: nowrap; color: #3c3c3c; }
.combo i {
  width: 21px;
  border-left: 1px solid #c0beba;
  border-radius: 0 3px 3px 0;
  background: linear-gradient(#fff, #eeedec);
  display: grid;
  place-items: center;
}
.combo i::before {
  content: "";
  border: 4px solid transparent;
  border-top: 5px solid #777;
  border-bottom: 0;
}
.font-combo { width: 139px; margin: 0 0 0 1.5px; letter-spacing: -.2px; }
.size-combo { width: 62px; height: 23px; margin: 0 0 0 2px; line-height: 20px; }
.formula-bar { height: 35px; flex: none; display: flex; align-items: center; }
.name-box { width: 137px; margin: 0 1px; }
.fx { margin: 0 3px 0 1px; }
.formula-input {
  width: 975px;
  height: 23px;
  flex: none;
  border: 1px solid #aaa8a3;
  border-radius: 4px;
  background: linear-gradient(#f4a13a, #f4a13a) 1px 5px / 1px 3px no-repeat, #fff;
}
.expand {
  width: 12px;
  height: 23px;
  margin-left: 4px;
  flex: none;
  display: grid;
  place-items: center;
  border: 1px solid #b8b6b2;
  border-radius: 4px;
  background: linear-gradient(#fff, #efeeed);
}
.expand .drop { width: 10px; }

/* sheet */
.sheet-area { display: flex; height: 438px; flex: none; border-top: 1px solid #b0aeaa; }
.grid { width: 1238px; overflow: hidden; background: #fff; }
.row {
  display: grid;
  grid-template-columns: 33px 140px 82px 151px 82px 143px repeat(7, 82px) 34px;
  grid-template-rows: 100%;
  height: 17px;
}
.row.head { height: 19px; }
.head .col, .num {
  border-right: 1px solid #8b8986;
  border-bottom: 1px solid #8b8986;
  color: #4c4c4c;
  text-align: center;
}
.head .col { padding-left: 1.5px; background: linear-gradient(#f8f8f7 50%, #f0efee 50%); line-height: 19px; font-size: 12.5px; }
.head .col:last-child { border-right: 0; }
.head .active { background: linear-gradient(#f6a688 45%, #ef7847 45%); color: #fff; font-weight: 700; }
.num { background: linear-gradient(90deg, #f8f8f7 50%, #f0efee 50%); line-height: 17px; font-size: 12.5px; }
.num.active { background: linear-gradient(90deg, #f6a688 50%, #ef7847 50%); color: #fff; font-weight: 700; }
.cell-box {
  position: relative;
  border-right: 1px solid #c0c0c0;
  border-bottom: 1px solid #c0c0c0;
  padding-left: 1px;
  color: #000;
  font: 13.333px/17px "Liberation Sans", Arial, sans-serif;
  white-space: nowrap;
}
.cell-box:last-child { border-right: 0; }
.cell-box span { position: relative; z-index: 1; }
.cell-box u {
  text-decoration: none;
  background:
    repeating-linear-gradient(90deg, #e33 0 2px, transparent 2px 4px) 0 calc(100% - 1px) / 100% 1px no-repeat,
    repeating-linear-gradient(90deg, transparent 0 2px, #e33 2px 4px) 0 100% / 100% 1px no-repeat;
}
.cursor::before {
  content: "";
  position: absolute;
  inset: -2px -2px -2px 0;
  border: 3px solid #000;
  border-left-width: 2px;
  z-index: 2;
}
.cursor::after {
  content: "";
  position: absolute;
  right: -5px;
  bottom: -5px;
  width: 6px;
  height: 6px;
  background: #000;
  z-index: 3;
}
.vscroll { width: 13px; display: flex; flex-direction: column; border-left: 1px solid #b5b3af; background: #f2f1f0; }
.split { height: 6px; background: linear-gradient(#111, #111) 3px 2px / 7px 1px no-repeat; border-bottom: 1px solid #ccc; }
.cap { height: 12px; display: grid; place-items: center; border: 1px solid #b5b3af; background: #f6f5f4; }
.cap::before { content: ""; border: 3px solid transparent; }
.up { border-radius: 6px 6px 0 0; }
.up::before { border-bottom-color: #aaa; border-top: 0; }
.thumb {
  position: relative;
  z-index: 1;
  height: 195px;
  margin-top: -1px;
  border: 1px solid #aaa8a3;
  border-radius: 6px;
  background: repeating-linear-gradient(#aaa 0 1px, transparent 1px 3px) 50% 50% / 5px 7px no-repeat, linear-gradient(90deg, #fff, #e4e3e1);
}
.trough { flex: 1; margin-top: -6px; background: #dddcda; border-radius: 0 0 6px 6px; }
.down { height: 13px; border-radius: 0 0 6px 6px; border-top: 0; }
.down::before { border-top-color: #666; border-bottom: 0; }

.tab-row { height: 13px; flex: none; display: flex; }
.hsplit { width: 7px; border: solid #8b8985; border-width: 0 1px 1px 1px; background: #f2f1f0; }
.hcap { width: 13px; border: 1px solid #b5b3af; background: #f6f5f4; display: grid; place-items: center; }
.hcap::before { content: ""; border: 3px solid transparent; }
.left { border-radius: 6px 0 0 6px; }
.left::before { border-right-color: #999; border-left: 0; }
.right { border-radius: 0 6px 6px 0; border-left: 0; }
.right::before { border-left-color: #555; border-right: 0; }
.hthumb {
  position: relative;
  z-index: 1;
  width: 433px;
  margin-left: -2px;
  border: 1px solid #aaa8a3;
  border-radius: 6px;
  background: repeating-linear-gradient(90deg, #aaa 0 1px, transparent 1px 3px) 50% 50% / 7px 4px no-repeat, linear-gradient(#fff, #e6e5e3);
}
.htrough { flex: 1; margin-left: -6px; background: #dddcda; border: 1px solid #b5b3af; border-radius: 0 6px 6px 0; }
.hend { width: 18px; background: linear-gradient(#111, #111) 2px 3px / 1px 8px no-repeat; }
.drawing { height: 40px; padding-bottom: 2px; border-bottom: 1px solid #b5b3b0; }
.drawing .grip { margin-right: 6px; }

/* status bar */
.status { height: 22px; flex: none; display: flex; align-items: center; font-size: 12.4px; }
.cell { height: 17px; display: flex; align-items: center; border-right: 1px solid #cfcdca; flex: none; line-height: 17px; }
.c-sheet { width: 317px; padding-left: 10px; letter-spacing: -.15px; }
.c-style { width: 297px; padding-left: 8px; }
.c-blank { width: 68px; }
.c-mode { width: 29px; padding-left: 8px; }
.c-mod { width: 28px; padding-left: 8px; }
.c-sign { width: 30px; }
.c-sum { width: 291px; justify-content: center; padding-left: 2px; letter-spacing: -.4px; }
.c-zoom { width: 144px; padding-left: 10px; }
.c-pct { border: 0; padding-left: 6px; }
```

FILE: sheet.js
```js
const letters = "ABCDEFGHIJKLM".split("");
const varchar = "<u>varchar</u> 255)";

/* cell address -> [content, tracking in px] */
const data = {
  A1: ["Clients", -0.1],
  A2: ["id(integer primary key)", -0.14],
  A3: ["name(" + varchar, -0.25],
  A4: ["city(" + varchar, -0.13],
  C1: ["Gym", 0],
  C2: ["id(integer primary key)", -0.14],
  C3: ["name(" + varchar, -0.25],
  C4: ["workout_where_lives?(boolean)", -0.28],
  C5: ["week_frequency(int)", -0.19],
  C6: ["plans_id(int)", -0.2],
  C7: ["clients_id(int)", -0.08],
  E1: ["Plans", -0.1],
  E2: ["id(integer primary key)", -0.14],
  E3: ["name(" + varchar, -0.25],
  A9: ["This table is <u>usefull</u> to know if the customers of a gym works out in the same city where them lives.", -0.025],
  A10: ["If they can find a trend with that they can predict an opportunity for an expansion or to make partnerships with local gyms.", -0.08],
  A11: ["They can also measure how often the customers go to the gym, so they can create the perfect plan for each one and attract more clients with good prices.", -0.08]
};

let html = '<div class="row head"><div class="col"></div>';
for (const c of letters) {
  html += `<div class="col${c === "A" ? " active" : ""}">${c === "M" ? "" : c}</div>`;
}
html += "</div>";
for (let r = 1; r <= 25; r++) {
  html += `<div class="row"><div class="num${r === 12 ? " active" : ""}">${r}</div>`;
  for (const c of letters) {
    const cursor = c + r === "A12" ? " cursor" : "";
    const entry = data[c + r];
    const content = entry ? `<span style="letter-spacing:${entry[1]}px">${entry[0]}</span>` : "";
    html += `<div class="cell-box${cursor}">${content}</div>`;
  }
  html += "</div>";
}
document.getElementById("grid").innerHTML = html;
```
